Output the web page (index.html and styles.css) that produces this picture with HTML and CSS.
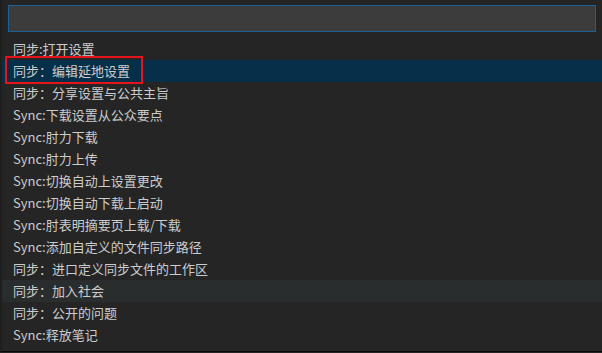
FILE: index.html
```html
<!DOCTYPE html>
<html lang="zh">
<head>
<meta charset="utf-8">
<link rel="stylesheet" href="styles.css">
</head>
<body>
<div class="palette">
  <div class="input-wrap"><div class="input"></div></div>
  <ul class="list">
    <li class="row">同步:打开设置</li>
    <li class="row selected"><span class="mark"></span>同步：编辑延地设置</li>
    <li class="row">同步：分享设置与公共主旨</li>
    <li class="row">Sync:下载设置从公众要点</li>
    <li class="row">Sync:肘力下载</li>
    <li class="row">Sync:肘力上传</li>
    <li class="row">Sync:切换自动上设置更改</li>
    <li class="row">Sync:切换自动下载上启动</li>
    <li class="row">Sync:肘表明摘要页上载/下载</li>
    <li class="row">Sync:添加自定义的文件同步路径</li>
    <li class="row">同步：进口定义同步文件的工作区</li>
    <li class="row hover">同步：加入社会</li>
    <li class="row">同步：公开的问题</li>
    <li class="row">Sync:释放笔记</li>
  </ul>
</div>
</body>
</html>
```
FILE: styles.css
```css
html, body {
  margin: 0;
  padding: 0;
  background: #252526;
}
body {
  width: 602px;
  height: 353px;
  overflow: hidden;
  font-family: "Noto Sans CJK SC", "Noto Sans", sans-serif;
  font-size: 13px;
  color: #cccccc;
}
.palette {
  height: 352px;
  border-bottom: 1px solid #0a0a0a;
  border-left: 2px solid #1f1f1f;
  box-sizing: border-box;
  padding-top: 5px;
}
.input-wrap {
  padding-left: 6px;
}
.input {
  width: 588px;
  height: 27px;
  box-sizing: border-box;
  background: #3c3c3c;
  border: 1px solid #1c6196;
}
.list {
  list-style: none;
  margin: 6px 0 0 0;
  padding: 0;
}
.row {
  position: relative;
  height: 22px;
  line-height: 22px;
  padding-left: 11px;
  white-space: nowrap;
}
.row.selected {
  background: #062f4a;
}
.row.hover {
  background: #2a2d2e;
}
.mark {
  position: absolute;
  left: 3px;
  top: -4px;
  width: 138px;
  height: 28px;
  box-sizing: border-box;
  border: 2px solid #e8121b;
}
```
